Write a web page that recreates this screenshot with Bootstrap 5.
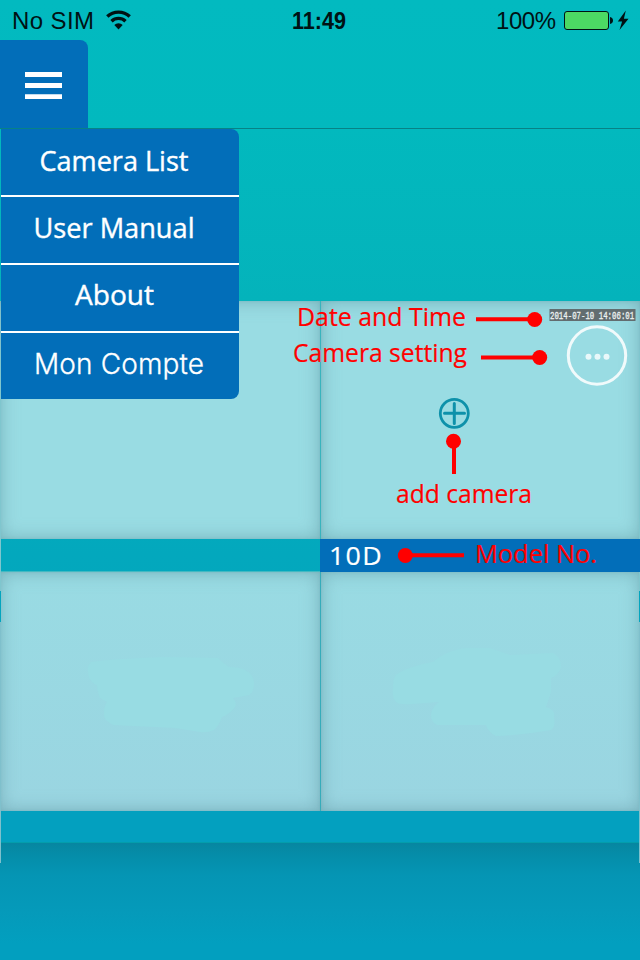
<!DOCTYPE html>
<html lang="en">
<head>
<meta charset="utf-8">
<meta name="viewport" content="width=device-width, initial-scale=1">
<title>Camera viewer</title>
<link href="https://cdn.jsdelivr.net/npm/bootstrap@5.3.0/dist/css/bootstrap.min.css" rel="stylesheet">
<style>
body { margin: 0; background: #029fbe; font-family: "Open Sans", "Noto Sans", sans-serif; }
.screen { width: 640px; height: 960px; background: linear-gradient(#02bac0 0, #02b9be 128px, #04b3bb 300px, #03a8bd 555px, #03a0bf 830px); }
.status { height: 40px; font-family: "Liberation Sans", Arial, sans-serif; color: #001214; }
.status svg { display: block; }
.topbar { height: 89px; border-bottom: 1px solid #078286; }
.menu-btn { width: 88px; height: 88px; background: #026eb9; border: 0; border-radius: 0 8px 0 0; padding: 3px 2px 0 0; }
.main-area { height: 172px; }
.side-menu { left: 1px; top: 0; width: 238px; z-index: 3; border-radius: 0 8px 8px 0; overflow: hidden; background: #026eb9; }
.side-menu a { display: block; height: 68px; border-bottom: 2px solid #fff; color: #fff; text-decoration: none; font-size: 28px; white-space: nowrap; }
.side-menu a:last-child { height: 66px; border: 0; }
.side-menu svg { display: block; }
.semi { stroke: #fff; stroke-width: .4px; }
.tile { width: 321px; height: 238px; background: #99dce3; box-shadow: inset 0 0 18px rgba(95,150,160,.6), inset 0 0 3px rgba(90,150,160,.3); border-right: 1px solid #38b4bd; }
.tile.last-col { width: 319px; border-right: 0; }
.tile.low { height: 239px; background: linear-gradient(#99dbe3, #9ad5e1); border-right-color: #35acba; }
.strip { height: 33px; }
.strip-name { width: 320px; background: #026eb9; z-index: 3; }
.strip-empty { width: 320px; border-bottom: 1px solid #42b9c2; }
.base { height: 31px; background: #03a0bf; }
.foot { height: 118px; background: linear-gradient(#0786a0 0, #058da9 12px, #0595b4 32px, #059aba 68px, #029fbf 100px); border-top: 1px solid #039dac; }
.edge { top: 350px; width: 1px; height: 513px; background: linear-gradient(#7fc6ce 241px, #03a5be 241px, #03a5be 272px, #7fc0cc 272px); z-index: 2; }
.notes { left: 0; top: 0; z-index: 4; pointer-events: none; }
</style>
<script src="https://cdn.jsdelivr.net/npm/bootstrap@5.3.0/dist/js/bootstrap.bundle.min.js"></script>
</head>
<body>
<div class="screen position-relative overflow-hidden d-flex flex-column">
  <header>
    <div class="status">
      <svg width="640" height="40" viewBox="0 0 640 40" role="img" aria-label="Status bar">
        <g fill="#001214" font-size="24">
          <text x="12" y="29" textLength="82">No SIM</text>
          <text x="292" y="29" font-weight="700" textLength="54" lengthAdjust="spacingAndGlyphs">11:49</text>
          <text x="496" y="29" textLength="60">100%</text>
        </g>
        <g fill="none" stroke="#001214" stroke-width="3.400">
          <path d="M107.300 16.600a16.200 16.200 0 0 1 22.400 0M111.500 21.200a10.200 10.200 0 0 1 14 0"/>
        </g>
        <path d="M114.300 25a6 6 0 0 1 8.400 0L118.500 29.500z" fill="#001214"/>
        <rect x="564.5" y="11.5" width="44" height="18" rx="2.5" fill="#4cd964" stroke="#001214"/>
        <path d="M610 17c4 .5 4 6.500 0 7z" fill="#001214"/>
        <path d="M625.800 10.500L617.800 21.500h4.300L619.500 30 628.500 18.800h-4.600z" fill="#001214"/>
      </svg>
    </div>
    <div class="topbar">
      <button class="menu-btn d-flex align-items-center justify-content-center" aria-label="Menu">
        <svg width="37" height="28" viewBox="0 0 37 28" fill="#fff"><path d="M0 0h37v5H0zM0 11h37v5H0zM0 22.200h37v4.800H0z"/></svg>
      </button>
    </div>
  </header>

  <main class="position-relative">
    <nav class="side-menu position-absolute" aria-label="Main menu">
      <a href="#"><svg width="238" height="66" fill="#fff"><text class="semi" x="38.500" y="42" textLength="149" lengthAdjust="spacingAndGlyphs">Camera List</text></svg></a>
      <a href="#"><svg width="238" height="66" fill="#fff"><text class="semi" x="32.500" y="41" textLength="161" lengthAdjust="spacingAndGlyphs">User Manual</text></svg></a>
      <a href="#"><svg width="238" height="66" fill="#fff"><text class="semi" x="74" y="40" textLength="79" lengthAdjust="spacingAndGlyphs">About</text></svg></a>
      <a href="#"><svg width="238" height="66" fill="#fff"><text x="33" y="40.500" font-family="Inter, sans-serif" font-weight="300" font-size="28" stroke="#fff" stroke-width=".3" textLength="170">Mon Compte</text></svg></a>
    </nav>
    <div class="main-area"></div>
    <section>
      <div class="d-flex"><div class="tile"></div><div class="tile last-col"></div></div>
      <div class="d-flex strip"><div class="strip-empty"></div><div class="strip-name position-relative"></div></div>
      <div class="d-flex">
        <div class="tile low">
          <svg class="d-block" width="320" height="239" viewBox="0 572 320 239"><path fill="#98dce3" d="M89 677Q86 666 91 662Q105 660 122 659L163 657L218 658Q223 663 229 667Q240 667 245 670Q254 675 254 683Q254 692 249 695L233 698Q237 702 235 707Q230 714 222 717Q219 726 214 730Q207 733 200 732L175 728L114 725Q103 721 104 713Q104 706 107 702L100 698Q97 690 97 685Q91 683 89 677Z"/></svg>
        </div>
        <div class="tile low last-col">
          <svg class="d-block" width="319" height="239" viewBox="321 572 319 239"><path fill="#98dce3" d="M393 690Q393 679 396 675Q406 667 433 662Q448 650 465 648L490 648Q501 652 510 655L553 653Q561 657 561 667Q558 676 551 678L551 692L546 707Q556 710 554 717Q556 726 551 730Q524 735 496 736Q488 732 486 725L437 725Q431 722 431 715Q432 707 439 702L412 704Q400 705 396 702Q392 697 393 690Z"/></svg>
        </div>
      </div>
    </section>
  </main>
  <div class="base"></div>
  <footer class="foot"></footer>

  <i class="edge position-absolute start-0"></i>
  <i class="edge position-absolute end-0"></i>

  <!-- callouts over the camera view -->
  <svg class="notes position-absolute" width="640" height="960" viewBox="0 0 640 960">
    <rect x="549.500" y="309" width="86" height="12" fill="#626d70"/>
    <text transform="translate(550 319) scale(.672 1)" fill="#eef3f3" font-family="Liberation Mono, monospace" font-size="11" stroke="#eef3f3" stroke-width=".3">2014-07-10 14:06:01</text>
    <circle cx="597" cy="355.500" r="28.700" fill="none" stroke="#f0fafb" stroke-width="3"/>
    <g fill="#e9f8fa"><circle cx="588.500" cy="356.700" r="3"/><circle cx="597.500" cy="356.700" r="3"/><circle cx="606.500" cy="356.700" r="3"/></g>
    <g fill="none" stroke="#0e91aa"><circle cx="454.300" cy="413.300" r="14" stroke-width="2.800"/><path d="M444.500 413.300h20M454.300 403.500v20" stroke-width="3" stroke-linecap="round"/></g>
    <g stroke="red" stroke-width="4" fill="red">
      <path d="M476 319.300h59M481 357.500h59M454 441v33M405 555.300h59"/>
      <g stroke="none"><circle cx="534.700" cy="319.500" r="7.500"/><circle cx="539.700" cy="357.500" r="7.500"/><circle cx="453.500" cy="441.300" r="7.500"/><circle cx="405.300" cy="555.500" r="7.500"/></g>
    </g>
    <g fill="red" stroke="red" stroke-width=".2" font-size="25.500">
      <text x="297" y="326" textLength="169" lengthAdjust="spacingAndGlyphs">Date and Time</text>
      <text x="293" y="362" textLength="174" lengthAdjust="spacingAndGlyphs">Camera setting</text>
      <text x="396" y="503" textLength="136" lengthAdjust="spacingAndGlyphs">add camera</text>
      <text x="475" y="563" textLength="122" lengthAdjust="spacingAndGlyphs">Model No.</text>
    </g>
    <text x="329" y="565" fill="#fff" stroke="#fff" stroke-width=".2" font-size="25" letter-spacing="1.200" textLength="54" lengthAdjust="spacingAndGlyphs">10D</text>
  </svg>
</div>
</body>
</html>
